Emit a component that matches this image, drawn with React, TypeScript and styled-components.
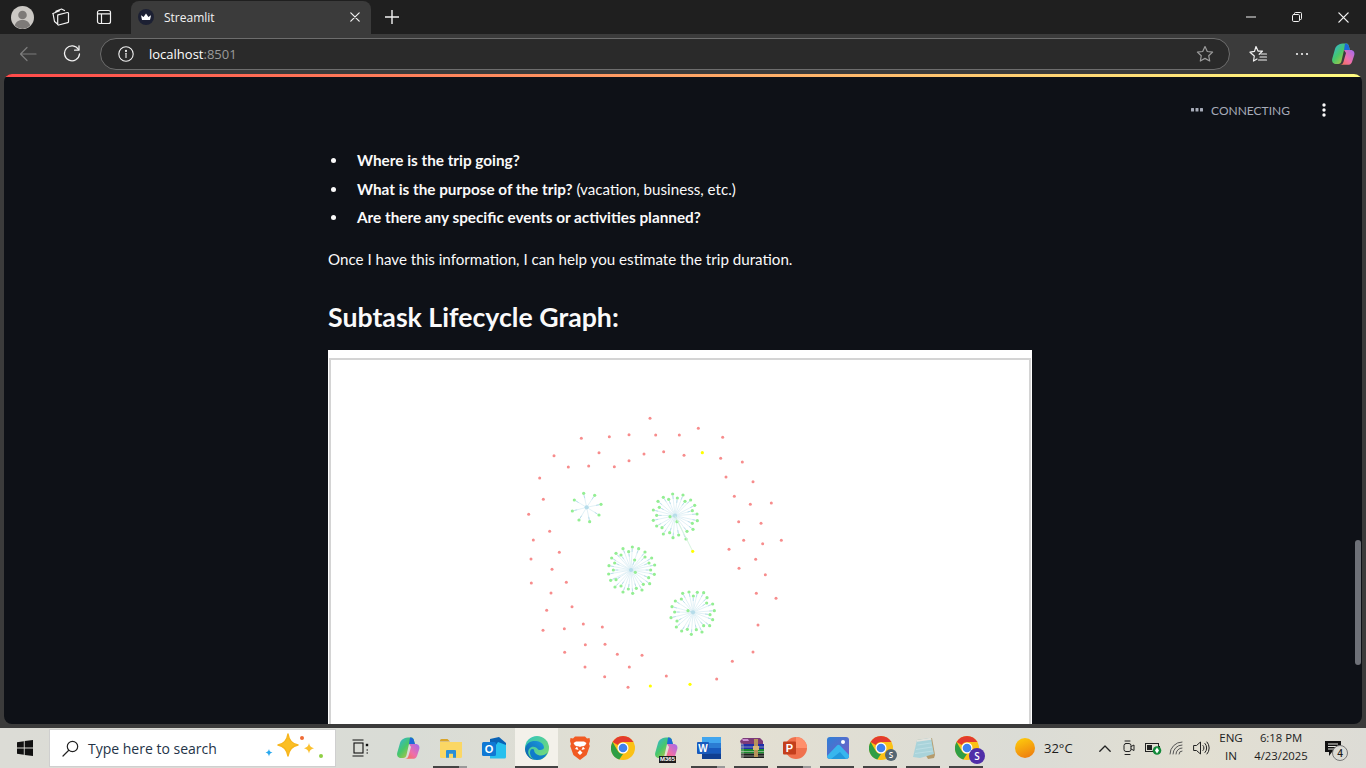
import React from "react";
import styled, { createGlobalStyle } from "styled-components";

const Global = createGlobalStyle`
  html, body { margin: 0; padding: 0; width: 1366px; height: 768px; overflow: hidden; background: #3b3b3b; }
  * { box-sizing: border-box; }
`;

const Page = styled.div`
  width: 1366px; height: 768px; display: flex; flex-direction: column;
  font-family: "Open Sans", "Noto Sans", sans-serif; background: #3b3b3b;
`;

/* ---------- Browser chrome ---------- */
const TabStrip = styled.div`
  height: 34px; background: #1f1f1f; display: flex; align-items: center; padding-left: 8px; flex: none;
`;
const StripIcon = styled.div<{ $w: number }>`
  width: ${p => p.$w}px; height: 34px; display: flex; align-items: center; justify-content: center; flex: none;
`;
const Tab = styled.div`
  width: 240px; height: 33px; margin-top: 1px; background: #3b3b3b; border-radius: 8px 8px 0 0; margin-left: 9px;
  display: flex; align-items: center; padding: 0 11px 1px 7px; color: #f2f2f2; font-size: 12px; flex: none;
`;
const TabTitle = styled.span` flex: 1; margin-left: 10px; `;
const WindowControls = styled.div` margin-left: auto; display: flex; `;
const WindowButton = styled.div`
  width: 46px; height: 34px; display: flex; align-items: center; justify-content: center;
`;
const Toolbar = styled.div`
  height: 40px; background: #3b3b3b; display: flex; align-items: center; flex: none; padding-left: 6px;
`;
const ToolIcon = styled.div<{ $w: number }>`
  width: ${p => p.$w}px; height: 40px; display: flex; align-items: center; justify-content: center; flex: none;
`;
const AddressBar = styled.div`
  width: 1130px; height: 32px; margin-left: 6px; border: 1px solid #6d6d6d; border-radius: 16px; background: #2a2a2a;
  display: flex; align-items: center; padding: 0 15px 0 17px; font-size: 13px; flex: none;
`;
const Host = styled.span` color: #fff; margin-left: 15px; font-weight: 500; flex: 1; `;
const Port = styled.span` color: #9a9a9a; font-weight: 400; `;

/* ---------- Streamlit page ---------- */
const Viewport = styled.div`
  flex: 1; margin: 0 4px 4px; background: #0e1117; border-radius: 8px; overflow: hidden;
  display: flex; flex-direction: column; position: relative; min-height: 0;
`;
const Decoration = styled.div`
  height: 3px; flex: none; background: linear-gradient(90deg, #ff4b4b, #fffd80);
`;
const Header = styled.div`
  height: 66px; flex: none; display: flex; align-items: center; justify-content: flex-end; padding-right: 36px;
  color: #a6abb8; font-family: "Lato", sans-serif; font-size: 12px;
`;
const StatusLabel = styled.span` margin-left: 8px; margin-right: 32px; `;
const Main = styled.div`
  width: 704px; margin-left: 324px; flex: 1; min-height: 0; display: flex; flex-direction: column; color: #fafafa;
  font-family: "Lato", sans-serif;
`;
const BulletList = styled.ul`
  margin: 5px 0 0; padding: 0; list-style: none; font-size: 15.15px; line-height: 24.5px; flex: none;
`;
const Bullet = styled.li`
  display: flex; margin-bottom: 4px; padding-left: 3px;
  &::before {
    content: ""; width: 5px; height: 5px; border-radius: 50%; background: #fafafa; margin: 10px 21px 0 0; flex: none;
  }
`;
const Strong = styled.strong` font-weight: 700; font-size: 15.3px; `;
const Para = styled.p`
  margin: 13px 0 0; font-size: 15.15px; line-height: 25px; flex: none;
`;
const Heading = styled.h3`
  margin: 24px 0 0; font-size: 26.7px; line-height: 42px; font-weight: 700; flex: none; color: #fafafa;
`;
const GraphCard = styled.div`
  margin-top: 12px; flex: 1; min-height: 0; background: #fff; overflow: hidden; padding-top: 8px;
`;
const GraphFrame = styled.div`
  height: 100%; margin: 0 1px; border: 2px solid #d4d4d4; border-bottom: 0;
  background: #fff; overflow: hidden;
`;
const GraphSvg = styled.svg` display: block; width: 698px; height: 366px; `;
const GraphInk = styled.g` filter: blur(0.4px); `;
const ScrollThumb = styled.div`
  position: absolute; right: 1px; top: 466px; width: 6px; height: 125px; border-radius: 3px; background: #6e7178;
`;

/* ---------- Taskbar ---------- */
const Taskbar = styled.div`
  height: 40px; flex: none; display: flex; align-items: stretch;
  background: linear-gradient(90deg, #dcdcd6 0%, #d9dcd6 30%, #e4e0d2 52%, #dbdcd6 75%, #e2dfd2 88%, #dddcd6 100%);
  color: #1c1c1c; font-size: 12px;
`;
const StartButton = styled.div`
  width: 49px; display: flex; align-items: center; justify-content: center; flex: none;
`;
const SearchBox = styled.div`
  width: 287px; margin: 1px 0; background: #fff; border: 1px solid #cfcfcf; display: flex; align-items: center;
  padding: 0 11px 0 12px; font-size: 14px; color: #243447; flex: none;
`;
const SearchText = styled.span` margin-left: 9px; flex: 1; `;
const TaskViewSlot = styled.div`
  width: 50px; display: flex; align-items: center; justify-content: center; flex: none; padding-right: 3px;
`;
const AppSlot = styled.div<{ $active?: boolean; $bar?: boolean; $split?: boolean }>`
  width: 43px; flex: none; display: flex; align-items: center; justify-content: center; position: relative;
  background: ${p => (p.$active ? "#f3f1ea" : "transparent")};
  &::after {
    content: ""; position: absolute; bottom: 0; height: 2px;
    left: ${p => (p.$active ? "0" : "4px")}; right: ${p => (p.$active ? "0" : "5px")};
    display: ${p => (p.$bar || p.$active ? "block" : "none")};
    background: ${p => (p.$split ? "linear-gradient(90deg,#444 77%,#999 77%)" : "#444")};
  }
`;
const M365Tag = styled.span`
  position: absolute; left: 15px; bottom: 5px; background: #1d1d1d; color: #fff; font-size: 6px; line-height: 7px;
  font-weight: 700; padding: 0 1px; font-family: "Liberation Sans", sans-serif;
`;
const Weather = styled.div`
  margin-left: 27px; display: flex; align-items: center; flex: none; width: 74px; font-size: 13px;
`;
const WeatherText = styled.span` margin-left: 9px; `;
const Tray = styled.div` display: flex; align-items: center; flex: none; margin-left: 4px; `;
const TrayIcon = styled.div`
  width: 24px; height: 40px; display: flex; align-items: center; justify-content: center; flex: none;
`;
const Lang = styled.div`
  width: 38px; text-align: center; font-size: 11.6px; line-height: 18px; flex: none; margin-left: -1px; margin-top: 1px;
`;
const Clock = styled.div`
  width: 66px; text-align: center; font-size: 11.3px; line-height: 18px; flex: none; margin-left: -2px; margin-top: 1px;
`;
const Notify = styled.div`
  width: 36px; display: flex; align-items: center; justify-content: center; position: relative; flex: none; margin-left: 1px;
`;
const NotifyCount = styled.span`
  position: absolute; left: 17px; top: 17px; width: 16px; height: 16px; border-radius: 50%;
  border: 1px solid #777; background: #dcdcd6; font-size: 10px; line-height: 14px; text-align: center; font-weight: 600;
`;

/* ---------- Graph data (coordinates read at 3x from the two crops) ---------- */
type P = [number, number];
const a = (l: P[]): P[] => l.map(([x, y]) => [520 + x / 3, 410 + y / 3]);
const b = (l: P[]): P[] => l.map(([x, y]) => [520 + x / 3, 550 + y / 3]);

const reds: P[] = [
  ...a([[390,25],[535,55],[608,82],[184,85],[268,80],[327,74],[407,75],[478,75],[237,128],[372,132],[431,125],[492,136],[102,137],[145,171],[206,168],[283,170],[327,152],[602,145],[667,156],[59,204],[618,201],[699,215],[70,268],[643,259],[691,283],[754,279],[26,313],[656,335],[723,340],[89,364],[40,390],[671,391],[728,401],[784,391],[118,427],[627,418],[33,447],[707,448]]),
  ...b([[96,58],[657,55],[736,74],[34,99],[139,97],[93,129],[709,130],[768,145],[80,181],[156,170],[69,241],[133,236],[190,222],[247,231],[714,225],[196,284],[255,283],[134,307],[292,313],[366,316],[699,306],[637,334],[195,351],[328,351],[254,380],[439,378],[590,387],[324,412]]),
];
const yellows: P[] = [...a([[547,128],[518,424]]), ...b([[391,408],[510,403]])];

const clusters: { c: P; n: P[] }[] = [
  { c: a([[200,292]])[0], n: a([[191,250],[224,256],[163,270],[243,283],[157,303],[237,315],[177,330],[209,335]]) },
  { c: a([[465,317]])[0], n: a([[458,252],[489,255],[430,262],[472,264],[414,274],[446,268],[512,270],[495,274],[524,286],[418,292],[517,302],[400,300],[531,312],[410,316],[532,332],[400,331],[450,320],[471,335],[517,340],[410,348],[426,353],[519,358],[501,364],[449,368],[430,372],[476,375],[459,383],[498,387]]) },
  { c: b([[333,60]])[0], n: b([[337,-9],[309,-4],[356,-4],[326,5],[375,6],[288,10],[303,15],[375,21],[275,24],[395,24],[344,30],[284,39],[387,39],[267,47],[404,45],[386,83],[280,60],[392,60],[266,72],[403,73],[346,67],[272,91],[288,89],[389,101],[370,103],[303,108],[285,111],[349,115],[325,117],[366,120],[309,126],[338,130]]) },
  { c: b([[519,187]])[0], n: b([[488,130],[507,126],[532,127],[551,128],[520,138],[561,143],[484,147],[466,153],[560,159],[578,162],[456,170],[504,182],[583,182],[464,186],[570,194],[453,203],[578,209],[471,213],[551,227],[569,227],[469,231],[529,239],[502,238],[485,243],[546,246],[514,253]]) },
];

const Graph = () => (
  <GraphSvg viewBox="331 360 698 366">
    <GraphInk>
      {clusters.map((cl, i) => (
        <g key={i}>
          {cl.n.map(([x, y], j) => {
            const dx = x - cl.c[0], dy = y - cl.c[1];
            const d = Math.hypot(dx, dy) || 1;
            const ax = x - (dx / d) * 5, ay = y - (dy / d) * 5;
            return (
              <g key={j}>
                <line x1={cl.c[0]} y1={cl.c[1]} x2={x} y2={y} stroke="#dbeef4" strokeWidth={0.8} />
                <line x1={ax} y1={ay} x2={x - (dx / d) * 2} y2={y - (dy / d) * 2} stroke="#bcdeec" strokeWidth={1} />
              </g>
            );
          })}
          <circle cx={cl.c[0]} cy={cl.c[1]} r={2.1} fill="#b5dcea" />
          {cl.n.map(([x, y], j) => <circle key={j} cx={x} cy={y} r={1.6} fill="#93ee93" />)}
        </g>
      ))}
      <line x1={675} y1={515.7} x2={692.7} y2={551.3} stroke="#d3f2da" strokeWidth={0.9} />
      {reds.map(([x, y], i) => <circle key={i} cx={x} cy={y} r={1.5} fill="#f78c8c" />)}
      {yellows.map(([x, y], i) => <circle key={i} cx={x} cy={y} r={1.6} fill="#ffff00" />)}
    </GraphInk>
  </GraphSvg>
);

/* ---------- Icons ---------- */
const S = { fill: "none", stroke: "#f2f2f2", strokeWidth: 1.2, strokeLinecap: "round", strokeLinejoin: "round" } as const;

const Avatar = () => (
  <svg width="23" height="23" viewBox="0 0 23 23">
    <circle cx="11.5" cy="11.5" r="11.5" fill="#cbc8c4" />
    <circle cx="11.5" cy="9" r="4.3" fill="#7d7a78" />
    <path d="M3.8 19.5c1.2-4 4-5.5 7.7-5.5s6.5 1.5 7.7 5.5A11.5 11.5 0 0 1 11.5 23a11.5 11.5 0 0 1-7.7-3.5z" fill="#7d7a78" />
  </svg>
);
const Workspaces = () => (
  <svg width="18" height="18" viewBox="0 0 18 18" {...S}>
    <path d="M1 5.500 7.500 2.800M3.800 3.200 9.500 1l3 1.500" />
    <path d="M1 5.500l1.500 8 3 2.500" />
    <path d="M6 6.800l9.300-2.300a1 1 0 0 1 1.200 1v8.200a1 1 0 0 1-.8 1l-9 2.300a.8.8 0 0 1-1-.8V7.800a1 1 0 0 1 .3-1z" />
  </svg>
);
const VerticalTabs = () => (
  <svg width="16" height="16" viewBox="0 0 16 16" {...S}>
    <rect x="1.5" y="1.500" width="13" height="13" rx="2" />
    <path d="M1.500 4.800h13M5.500 4.800v9.700" />
  </svg>
);
const Crown = () => (
  <svg width="16" height="16" viewBox="0 0 16 16">
    <circle cx="8" cy="8" r="8" fill="#1c2033" />
    <path d="M3 6.300 5.600 8 8 4.500 10.400 8 13 6.300 12 11H4z" fill="#fff" />
  </svg>
);
const Cross = ({ s = 10 }: { s?: number }) => (
  <svg width={s} height={s} viewBox="0 0 10 10" {...S}><path d="M.8.8l8.400 8.400M9.200.8.800 9.200" /></svg>
);
const Plus = () => (
  <svg width="14" height="14" viewBox="0 0 14 14" {...S} strokeWidth={1.4}><path d="M7 0v14M0 7h14" /></svg>
);
const Minimize = () => <svg width="10" height="10" viewBox="0 0 10 10" {...S}><path d="M0 5h10" /></svg>;
const Restore = () => (
  <svg width="10" height="10" viewBox="0 0 10 10" {...S} strokeWidth={1}>
    <rect x=".5" y="2.500" width="7" height="7" rx="1.200" />
    <path d="M2.500 2.300V1.500a1 1 0 0 1 1-1h5a1 1 0 0 1 1 1v5a1 1 0 0 1-1 1h-.7" />
  </svg>
);
const Back = () => (
  <svg width="18" height="16" viewBox="0 0 18 16" {...S} stroke="#7c7c7c"><path d="M17 8H1.500M8 1.500 1.500 8 8 14.500" /></svg>
);
const Refresh = () => (
  <svg width="18" height="18" viewBox="0 0 18 18" {...S} strokeWidth={1.300}>
    <path d="M15.500 4.500A7.500 7.500 0 1 0 16.500 9" /><path d="M16 .8v4.400h-4.400" />
  </svg>
);
const Info = () => (
  <svg width="16" height="16" viewBox="0 0 16 16" {...S} strokeWidth={1.100}>
    <circle cx="8" cy="8" r="7.200" /><path d="M8 7.300v4.200" /><circle cx="8" cy="4.900" r=".5" fill="#f2f2f2" />
  </svg>
);
const StarIcon = () => (
  <svg width="18" height="18" viewBox="0 0 18 18" {...S} stroke="#9c9c9c">
    <path d="M9 1.500l2.300 5 5.300.6-3.900 3.600 1 5.300L9 13.400 4.300 16l1-5.300L1.400 7.100l5.300-.6z" />
  </svg>
);
const Favorites = () => (
  <svg width="20" height="18" viewBox="0 0 20 18" {...S}>
    <path d="M8 1.500l2 4.600h4.500l-3.300 3.200M5.500 16l.8-5L2 7.200l4.500-.8L8 1.500M5.500 16l3.500-2" />
    <path d="M13 9h5.500M12 12h6.500M10.500 15h8" />
  </svg>
);
const Dots = () => (
  <svg width="14" height="4" viewBox="0 0 14 4"><circle cx="2" cy="2" r="1.100" fill="#f2f2f2" /><circle cx="7" cy="2" r="1.100" fill="#f2f2f2" /><circle cx="12" cy="2" r="1.100" fill="#f2f2f2" /></svg>
);
const Copilot = ({ id, s = 24 }: { id: string; s?: number }) => (
  <svg width={s} height={s} viewBox="0 0 24 24">
    <defs>
      <linearGradient id={`${id}l`} x1="0" y1="0" x2="1" y2="1">
        <stop offset="0" stopColor="#2fb2e8" /><stop offset=".45" stopColor="#47c76a" /><stop offset="1" stopColor="#f2c230" />
      </linearGradient>
      <linearGradient id={`${id}r`} x1="1" y1="0" x2="0" y2="1">
        <stop offset="0" stopColor="#a06af0" /><stop offset=".55" stopColor="#ef6fa8" /><stop offset="1" stopColor="#f4704a" />
      </linearGradient>
    </defs>
    <path d="M14 1.500h1.500c1 0 1.800.6 2 1.600L19 8h-6l-2.500 11c-.4 1.700-1.500 3-3.300 3H5C2 22 .5 19.500 1.300 16.500L4 7c1-3.500 4-5.500 10-5.500z" fill={`url(#${id}l)`} />
    <path d="M13 8h6.500c3 0 4.500 2.200 3.800 5l-2.300 7c-.7 2-2.200 2.800-4.500 2.800H9c2 0 3-1 3.500-3L15 11z" fill={`url(#${id}r)`} />
    <path d="M14 1.500c1.500 0 3 .5 3.500 1.800L19 8h-6l1-6.500z" fill="#1c68d8" />
  </svg>
);
const WinLogo = () => (
  <svg width="16" height="16" viewBox="0 0 16 16" fill="#111">
    <path d="M0 2.200 6.800 1.200V7.500H0zM7.700 1.100 16 0V7.500H7.700zM0 8.400H6.800V14.800L0 13.800zM7.700 8.400H16V16L7.700 14.900z" />
  </svg>
);
const SearchGlass = () => (
  <svg width="17" height="17" viewBox="0 0 17 17" fill="none" stroke="#222" strokeWidth="1.200" strokeLinecap="round">
    <circle cx="10.500" cy="6.500" r="5.200" /><path d="M6.800 10.300 1 16" />
  </svg>
);
const Sparkles = () => (
  <svg width="62" height="30" viewBox="0 0 62 30">
    <path d="M26 1c1 7 4 10 10 11-6 1-9 5-10 11-1-6-4-10-10-11 6-1 9-4 10-11z" fill="#fbbf24" stroke="#f7b51c" strokeWidth="1.500" strokeLinejoin="round" />
    <path d="M47 10c.5 3 2 4.500 5 5.200-3 .7-4.500 2.200-5 5.300-.5-3-2-4.600-5-5.300 3-.7 4.500-2.200 5-5.200z" fill="#fbc02d" />
    <path d="M7 16c.4 2.200 1.400 3 3.500 3.500C8.400 20 7.400 21 7 23.500 6.600 21 5.600 20 3.500 19.500 5.600 19 6.600 18 7 16z" fill="#29a8ee" />
    <circle cx="40" cy="5" r="2" fill="#ef6a35" /><circle cx="59" cy="23" r="2" fill="#8fcf45" />
  </svg>
);
const TaskView = () => (
  <svg width="18" height="18" viewBox="0 0 18 18" fill="none" stroke="#111" strokeWidth="1.100">
    <path d="M1.500 1h11M1.500 17h11" /><rect x="3" y="4" width="9" height="10" />
    <rect x="14.800" y="4.800" width="2.400" height="2.400" fill="#111" stroke="none" />
    <path d="M15.500 11h1.500M15.500 14h1.500" />
  </svg>
);
const Explorer = () => (
  <svg width="22" height="19" viewBox="0 0 22 19">
    <path d="M0 1.500A1.500 1.500 0 0 1 1.500 0h6L10 2.500h-10z" fill="#d9a429" />
    <path d="M0 3h22v14.500a1.500 1.500 0 0 1-1.500 1.500h-19A1.500 1.500 0 0 1 0 17.500z" fill="#fbd764" />
    <path d="M6 18.800V12a1 1 0 0 1 1-1h8a1 1 0 0 1 1 1v6.800h-3v-4H9v4z" fill="#2a8fd8" />
  </svg>
);
const Outlook = () => (
  <svg width="24" height="22" viewBox="0 0 24 22">
    <path d="M8 2l9-2 7 6v12H8z" fill="#0a62b4" />
    <path d="M16 5l8 3v12a1.500 1.500 0 0 1-1.500 1.500H8v-5z" fill="#27c0ee" />
    <rect x="0" y="5" width="14" height="14" rx="1.500" fill="#0f78d4" />
    <text x="7" y="16.200" textAnchor="middle" fontFamily="Liberation Sans, sans-serif" fontWeight="700" fontSize="11" fill="#fff">O</text>
  </svg>
);
const Edge = () => (
  <svg width="24" height="24" viewBox="0 0 24 24">
    <defs>
      <linearGradient id="edgeA" x1="0" y1="0" x2="1" y2="1"><stop offset="0" stopColor="#2ec4c0" /><stop offset="1" stopColor="#7edc6c" /></linearGradient>
      <linearGradient id="edgeB" x1="0" y1="1" x2="1" y2="0"><stop offset="0" stopColor="#0a5ea8" /><stop offset="1" stopColor="#1d9ae0" /></linearGradient>
    </defs>
    <circle cx="12" cy="12" r="12" fill="url(#edgeA)" />
    <path d="M0 13C1 7 6 4.500 11 5c5 .5 8 3.500 8 6.500 0 1.500-1.500 2.500-4 2.500-1 0-1.800-.2-1.800-.2-1-2-3-3-5-3-3 0-5 2.500-5 5.500 0 3 2.500 6.500 7 7.500C5 24 .5 19 0 13z" fill="url(#edgeB)" />
    <path d="M9 13.500c0 3.500 3 6 7 6 2.500 0 5-1 6.500-3-1.500 4-5.500 7.500-10.500 7.500-4 0-7-3.500-7-7.500 0-2.500 1.500-4.500 4-3z" fill="#0f7ccb" />
  </svg>
);
const Brave = () => (
  <svg width="20" height="24" viewBox="0 0 20 24">
    <path d="M5 .5h10l2 2 2.500-.5L20 5l-1 3 .8 2-3.200 9L10 24l-6.600-5-3.200-9 .8-2L0 5l.5-3L3 2.500z" fill="#f15a22" />
    <path d="M10 11c-1-.8-3-.5-5-1.500L3.500 7 6 5.500h8L16.500 7 15 9.500c-2 1-4 .7-5 1.500zM10 14l2.500 2.800L10 19l-2.500-2.200z" fill="#fff" />
    <path d="M7 10.500l1.500 3.500L5 13zM13 10.500 11.500 14l3.500-1z" fill="#fff" />
  </svg>
);
const Chrome = () => (
  <svg width="24" height="24" viewBox="0 0 24 24">
    <circle cx="12" cy="12" r="12" fill="#fbc116" />
    <path d="M12 0a12 12 0 0 1 10.400 6H12a6 6 0 0 0-5.200 3L1.600 6A12 12 0 0 1 12 0z" fill="#e33b2e" />
    <path d="M1.600 6l5.200 9a6 6 0 0 0 5.200 3l-3.700 5.600A12 12 0 0 1 1.600 6z" fill="#2f9e44" />
    <circle cx="12" cy="12" r="5.500" fill="#fff" /><circle cx="12" cy="12" r="4.300" fill="#3f82ee" />
  </svg>
);
const Word = () => (
  <svg width="24" height="22" viewBox="0 0 24 22">
    <rect x="5" y="0" width="19" height="22" rx="1.500" fill="#2b7cd3" />
    <rect x="5" y="0" width="19" height="6" fill="#41a5ee" />
    <rect x="5" y="11" width="19" height="5.500" fill="#185abd" />
    <rect x="5" y="16.500" width="19" height="5.500" fill="#103f91" />
    <rect x="0" y="5" width="12" height="12" rx="1" fill="#185abd" />
    <text x="6" y="14.700" textAnchor="middle" fontFamily="Liberation Sans, sans-serif" fontWeight="700" fontSize="10" fill="#fff">W</text>
  </svg>
);
const Rar = () => (
  <svg width="24" height="20" viewBox="0 0 24 20">
    <path d="M3 0h17l3 3v3H1L0 3z" fill="#7b3a78" /><path d="M2 1h6l1 2H3z" fill="#c98ed0" />
    <rect x="1" y="6" width="23" height="5" fill="#1f2fa8" />
    <rect x="1" y="11" width="23" height="4.500" fill="#1a8a2e" />
    <rect x="1" y="15.500" width="23" height="4.500" fill="#1f1f1f" />
    <path d="M1 6h2v14H1zM1 9h23M1 13.500h23M1 18h23" stroke="#cfd2c4" strokeWidth=".6" fill="none" />
    <rect x="14" y="1" width="4" height="18" fill="#b8945a" /><rect x="13" y="8" width="6" height="4" fill="#d7b676" />
  </svg>
);
const Ppt = () => (
  <svg width="24" height="22" viewBox="0 0 24 22">
    <circle cx="13" cy="11" r="11" fill="#f0714d" />
    <path d="M13 0a11 11 0 0 1 11 11H13z" fill="#ff8f6b" />
    <rect x="0" y="4.500" width="13" height="13" rx="1" fill="#c43e1c" />
    <text x="6.500" y="15" textAnchor="middle" fontFamily="Liberation Sans, sans-serif" fontWeight="700" fontSize="11" fill="#fff">P</text>
  </svg>
);
const Photos = () => (
  <svg width="22" height="22" viewBox="0 0 22 22">
    <defs><linearGradient id="phG" x1="0" y1="0" x2="1" y2="1"><stop offset="0" stopColor="#2e7fd6" /><stop offset="1" stopColor="#7a5cc4" /></linearGradient></defs>
    <rect width="22" height="22" rx="3" fill="url(#phG)" />
    <circle cx="16" cy="5" r="2" fill="#fff" />
    <path d="M0 19 10 8.500a2 2 0 0 1 3 0L22 18v1a3 3 0 0 1-3 3H3a3 3 0 0 1-3-3z" fill="#38b6ee" />
    <path d="M4 22l9-7 6 7z" fill="#2398dc" />
  </svg>
);
const ChromeBadge = styled.span<{ $big?: boolean }>`
  position: absolute; border-radius: 50%; color: #fff; text-align: center; font-weight: 600;
  font-family: "Open Sans", sans-serif;
  left: ${p => (p.$big ? "24px" : "26px")}; top: ${p => (p.$big ? "20px" : "21px")};
  width: ${p => (p.$big ? "16px" : "12px")}; height: ${p => (p.$big ? "16px" : "12px")};
  line-height: ${p => (p.$big ? "16px" : "12px")}; font-size: ${p => (p.$big ? "10px" : "8px")};
  background: ${p => (p.$big ? "#4f2ea8" : "#556673")};
`;
const Notepad = () => (
  <svg width="22" height="23" viewBox="0 0 22 23">
    <path d="M4 3 19 1l3 17-1 3L15 22z" fill="#b59b6c" />
    <path d="M4 3 18 .8 21 17 7 21 0 20z" fill="#a9d3da" />
    <path d="M4 3 18 .8l.4 2-14.400 2z" fill="#e3e3dd" />
    <path d="M4.500 8 18 6M3 12.500 19 10M2 16.500 20 14" stroke="#c4e3e8" strokeWidth=".7" fill="none" />
  </svg>
);
const Sun = () => (
  <svg width="20" height="20" viewBox="0 0 20 20">
    <defs><linearGradient id="sunG" x1="0.300" y1="0" x2="0.700" y2="1"><stop offset="0" stopColor="#fdc90c" /><stop offset="1" stopColor="#ee7d10" /></linearGradient></defs>
    <circle cx="10" cy="10" r="10" fill="url(#sunG)" />
  </svg>
);
const T = { fill: "none", stroke: "#222", strokeWidth: 1, strokeLinecap: "round", strokeLinejoin: "round" } as const;
const Chevron = () => <svg width="12" height="7" viewBox="0 0 12 7" {...T} strokeWidth={1.300}><path d="M.8 6.200 6 1l5.200 5.200" /></svg>;
const Camera = () => (
  <svg width="12" height="16" viewBox="0 0 12 16" {...T}>
    <rect x="1" y="3.500" width="7" height="8" rx="2" /><path d="M8 6.500l3-1.500v5.500l-3-1.500M2 1h5M2 14.500h5" />
  </svg>
);
const Battery = () => (
  <svg width="17" height="13" viewBox="0 0 17 13">
    <rect x=".5" y="1.500" width="13" height="8" fill="none" stroke="#222" /><rect x="2" y="3" width="5" height="5" fill="#222" />
    <path d="M14.500 4v3" stroke="#222" /><circle cx="12" cy="8.500" r="4.300" fill="#128a3a" />
    <path d="M12 5.500 14 8.500 12 11.500 10 8.500z" fill="#fff" />
  </svg>
);
const Wifi = () => (
  <svg width="16" height="14" viewBox="0 0 16 14" {...T} stroke="#555">
    <path d="M1 13A12 12 0 0 1 13 1M4 13a9 9 0 0 1 9-9M7 13a6 6 0 0 1 6-6M10 13a3 3 0 0 1 3-3" />
  </svg>
);
const Speaker = () => (
  <svg width="17" height="14" viewBox="0 0 17 14" {...T}>
    <path d="M1 4.500h2.500L7.500 1v12L3.500 9.500H1zM10 4.500a3.500 3.500 0 0 1 0 5M12 2.500a6.500 6.500 0 0 1 0 9M14 1a9 9 0 0 1 0 12" />
  </svg>
);
const Bubble = () => (
  <svg width="16" height="15" viewBox="0 0 16 15">
    <path d="M0 0h16v11H7l-3 4v-4H0z" fill="#111" /><path d="M3 3h10M3 5.500h10M3 8h7" stroke="#e6e6e0" />
  </svg>
);
const BarsDots = () => (
  <svg width="12" height="4" viewBox="0 0 12 4" fill="#a6abb8"><rect width="3" height="3.500" rx=".5" /><rect x="4.500" width="3" height="3.500" rx=".5" /><rect x="9" width="3" height="3.500" rx=".5" /></svg>
);
const Kebab = () => (
  <svg width="4" height="14" viewBox="0 0 4 14" fill="#fafafa"><circle cx="2" cy="2" r="1.700" /><circle cx="2" cy="7" r="1.700" /><circle cx="2" cy="12" r="1.700" /></svg>
);

export default function App() {
  return (
    <Page>
      <Global />
      <TabStrip>
        <StripIcon $w={28}><Avatar /></StripIcon>
        <StripIcon $w={50}><Workspaces /></StripIcon>
        <StripIcon $w={36}><VerticalTabs /></StripIcon>
        <Tab><Crown /><TabTitle>Streamlit</TabTitle><Cross /></Tab>
        <StripIcon $w={42}><Plus /></StripIcon>
        <WindowControls>
          <WindowButton><Minimize /></WindowButton>
          <WindowButton><Restore /></WindowButton>
          <WindowButton><Cross s={11} /></WindowButton>
        </WindowControls>
      </TabStrip>
      <Toolbar>
        <ToolIcon $w={44}><Back /></ToolIcon>
        <ToolIcon $w={44}><Refresh /></ToolIcon>
        <AddressBar>
          <Info /><Host>localhost<Port>:8501</Port></Host><StarIcon />
        </AddressBar>
        <ToolIcon $w={56}><Favorites /></ToolIcon>
        <ToolIcon $w={31}><Dots /></ToolIcon>
        <ToolIcon $w={51}><Copilot id="cpA" /></ToolIcon>
      </Toolbar>
      <Viewport>
        <Decoration />
        <Header><BarsDots /><StatusLabel>CONNECTING</StatusLabel><Kebab /></Header>
        <Main>
          <BulletList>
            <Bullet><span><Strong>Where is the trip going?</Strong></span></Bullet>
            <Bullet><span><Strong>What is the purpose of the trip?</Strong> (vacation, business, etc.)</span></Bullet>
            <Bullet><span><Strong>Are there any specific events or activities planned?</Strong></span></Bullet>
          </BulletList>
          <Para>Once I have this information, I can help you estimate the trip duration.</Para>
          <Heading>Subtask Lifecycle Graph:</Heading>
          <GraphCard><GraphFrame><Graph /></GraphFrame></GraphCard>
        </Main>
        <ScrollThumb />
      </Viewport>
      <Taskbar>
        <StartButton><WinLogo /></StartButton>
        <SearchBox><SearchGlass /><SearchText>Type here to search</SearchText><Sparkles /></SearchBox>
        <TaskViewSlot><TaskView /></TaskViewSlot>
        <AppSlot><Copilot id="cpB" /></AppSlot>
        <AppSlot $bar $split><Explorer /></AppSlot>
        <AppSlot><Outlook /></AppSlot>
        <AppSlot $active><Edge /></AppSlot>
        <AppSlot><Brave /></AppSlot>
        <AppSlot><Chrome /></AppSlot>
        <AppSlot><Copilot id="cpC" /><M365Tag>M365</M365Tag></AppSlot>
        <AppSlot $bar $split><Word /></AppSlot>
        <AppSlot $bar><Rar /></AppSlot>
        <AppSlot $bar $split><Ppt /></AppSlot>
        <AppSlot $bar><Photos /></AppSlot>
        <AppSlot $bar><Chrome /><ChromeBadge>S</ChromeBadge></AppSlot>
        <AppSlot $bar><Notepad /></AppSlot>
        <AppSlot $bar><Chrome /><ChromeBadge $big>S</ChromeBadge></AppSlot>
        <Weather><Sun /><WeatherText>32°C</WeatherText></Weather>
        <Tray>
          <TrayIcon><Chevron /></TrayIcon>
          <TrayIcon><Camera /></TrayIcon>
          <TrayIcon><Battery /></TrayIcon>
          <TrayIcon><Wifi /></TrayIcon>
          <TrayIcon><Speaker /></TrayIcon>
        </Tray>
        <Lang>ENG<br />IN</Lang>
        <Clock>6:18 PM<br />4/23/2025</Clock>
        <Notify><Bubble /><NotifyCount>4</NotifyCount></Notify>
      </Taskbar>
    </Page>
  );
}
